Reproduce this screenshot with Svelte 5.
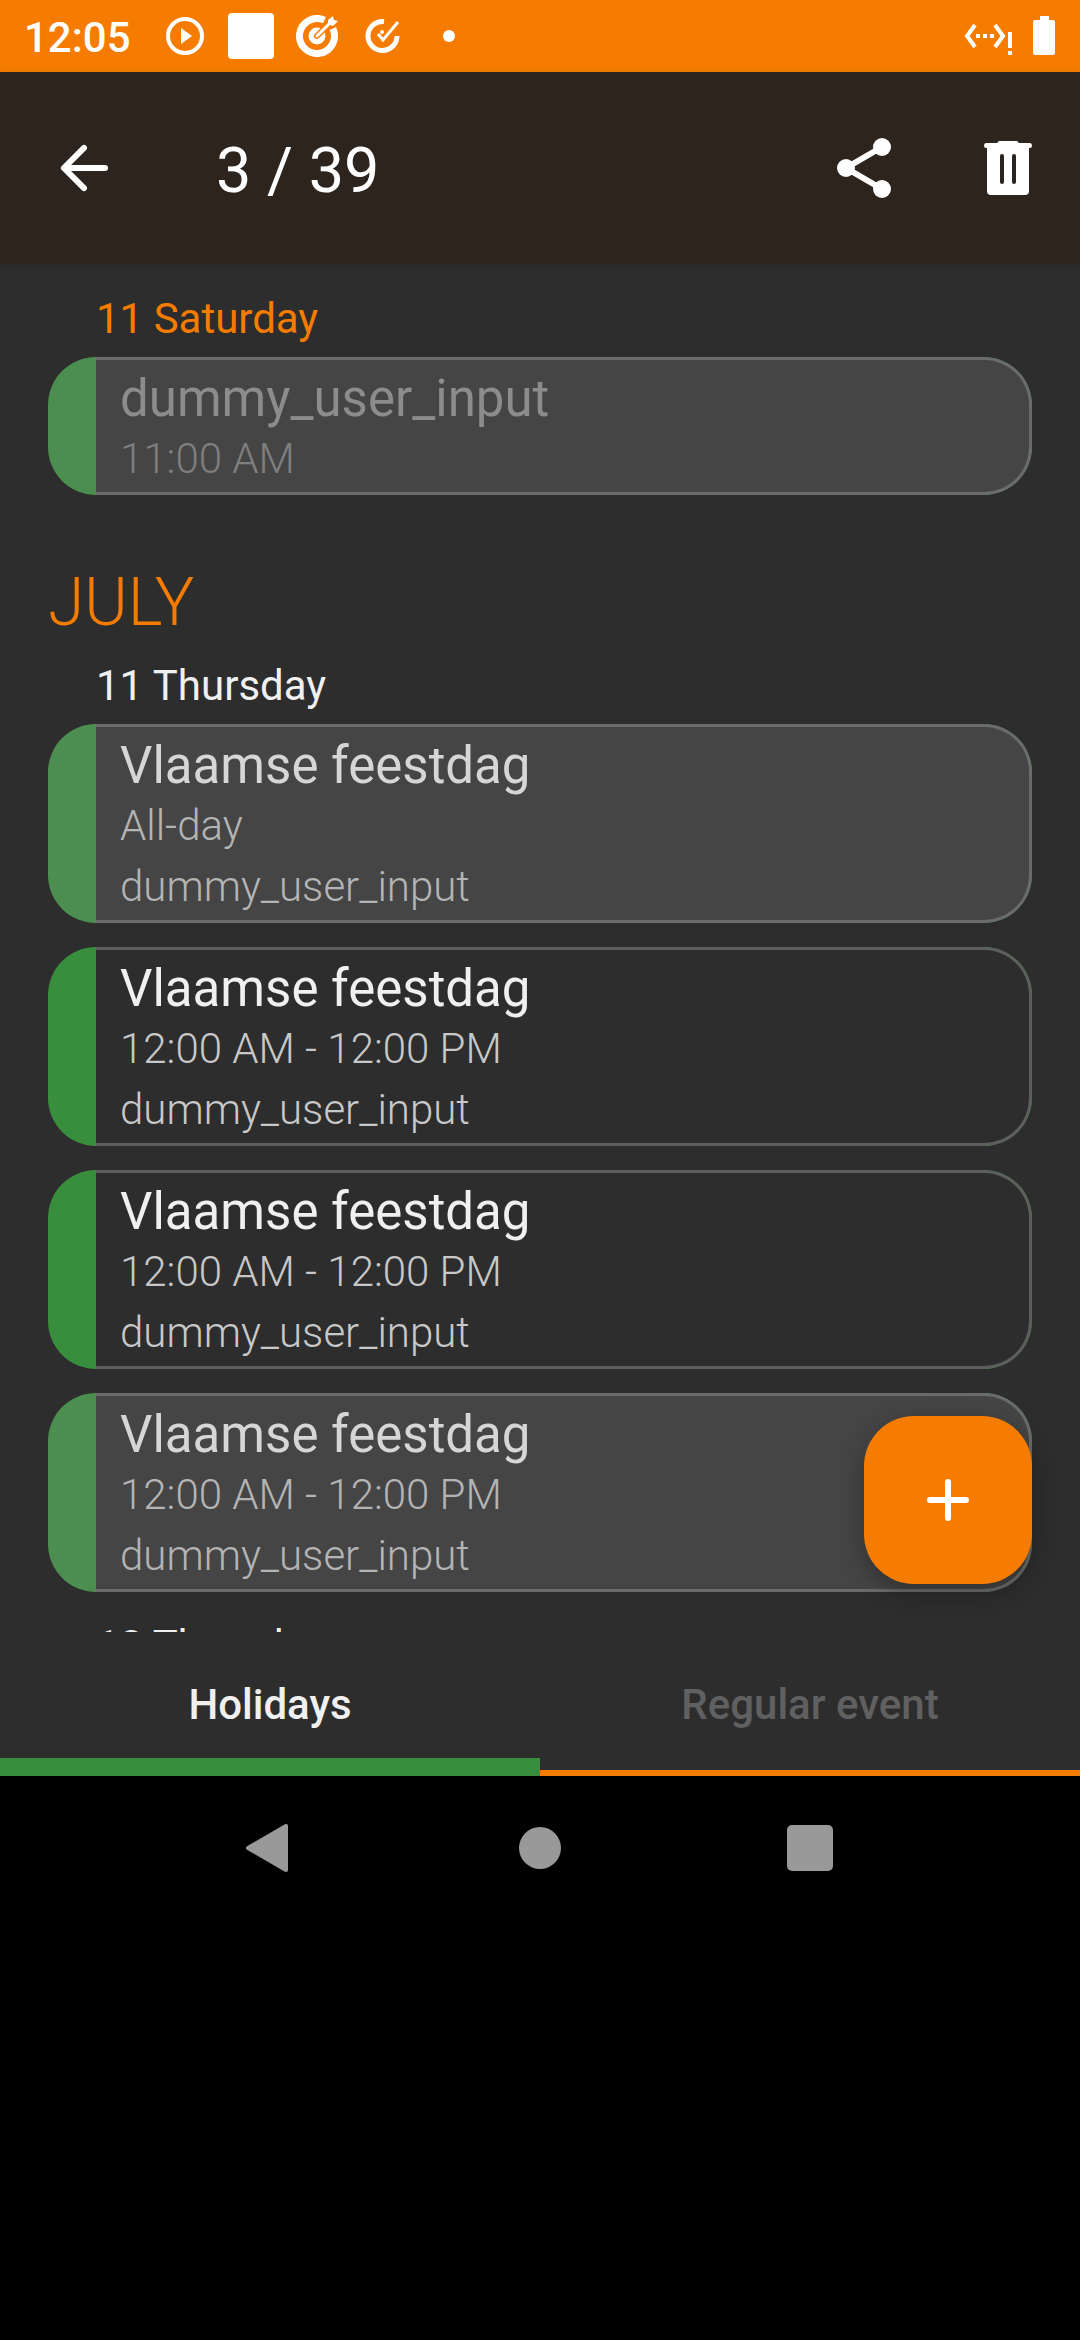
<script>
  const groups = [
    {
      month: null,
      days: [
        {
          label: '11 Saturday',
          today: true,
          events: [{ title: 'dummy_user_input', lines: ['11:00 AM'], selected: true, past: true }],
        },
      ],
    },
    {
      month: 'JULY',
      days: [
        {
          label: '11 Thursday',
          events: [
            { title: 'Vlaamse feestdag', lines: ['All-day', 'dummy_user_input'], selected: true },
            { title: 'Vlaamse feestdag', lines: ['12:00 AM - 12:00 PM', 'dummy_user_input'] },
            { title: 'Vlaamse feestdag', lines: ['12:00 AM - 12:00 PM', 'dummy_user_input'] },
            { title: 'Vlaamse feestdag', lines: ['12:00 AM - 12:00 PM', 'dummy_user_input'], selected: true },
          ],
        },
        { label: '18 Thursday', events: [] },
      ],
    },
  ];
</script>

<div class="screen">
  <header class="status">
    <span class="clock">12:05</span>
    <svg class="play" width="38" height="38" viewBox="0 0 38 38" aria-hidden="true">
      <circle cx="19" cy="19" r="17" fill="none" stroke="#fff" stroke-width="4" />
      <path d="M15 11v16l11-8z" fill="#fff" />
    </svg>
    <span class="block"></span>
    <svg class="target" width="42" height="42" viewBox="0 0 42 42" aria-hidden="true">
      <path d="M28.500 5.200A17.500 17.500 0 1 0 36.800 13.500" fill="none" stroke="#fff" stroke-width="7" />
      <circle cx="21" cy="21" r="8.500" fill="#fff" />
      <path d="M21 21L34 8" stroke="#f57c00" stroke-width="6" stroke-linecap="round" />
      <path d="M21 21L36 6" stroke="#fff" stroke-width="3" stroke-linecap="round" />
      <path d="M32 9V5l5-4 1 4 4 1-5 5z" fill="#fff" />
    </svg>
    <svg class="check" width="36" height="36" viewBox="0 0 36 36" aria-hidden="true">
      <path d="M19 3.500A14.500 14.500 0 1 0 32 18" fill="none" stroke="#fff" stroke-width="5" stroke-linecap="butt" />
      <path d="M13 16l5 6L33 4" fill="none" stroke="#fff" stroke-width="3" />
      <circle cx="17" cy="14" r="2" fill="#fff" />
    </svg>
    <span class="more"></span>
    <svg class="net" width="50" height="38" viewBox="0 0 50 38" aria-hidden="true">
      <path d="M12 8L4 19l8 11M32 8l8 11-8 11" fill="none" stroke="#fff" stroke-width="4" />
      <path d="M13 17h4v4h-4zM20 17h4v4h-4zM27 17h4v4h-4zM45 15h4v16h-4zM45 34h4v4h-4z" fill="#fff" />
    </svg>
    <svg width="24" height="40" viewBox="0 0 24 40" aria-hidden="true">
      <path d="M8 0h9v4h4q2 0 2 2v31q0 2-2 2H3q-2 0-2-2V6q0-2 2-2h5z" fill="#fff" />
    </svg>
  </header>

  <div class="toolbar">
    <button class="icon" aria-label="Back">
      <svg width="72" height="72" viewBox="0 0 24 24">
        <path d="M19 12H5.500M12 5.300L5.300 12l6.700 6.700" fill="none" stroke="#fff" stroke-width="2" stroke-linecap="round" stroke-linejoin="round" />
      </svg>
    </button>
    <h1>3 / 39</h1>
    <button class="icon" aria-label="Share">
      <svg width="72" height="72" viewBox="0 0 24 24">
        <path d="M18 5L6 12l12 7" fill="none" stroke="#fff" stroke-width="2" />
        <circle cx="18" cy="5" r="3" fill="#fff" />
        <circle cx="6" cy="12" r="3" fill="#fff" />
        <circle cx="18" cy="19" r="3" fill="#fff" />
      </svg>
    </button>
    <button class="icon" aria-label="Delete">
      <svg width="72" height="72" viewBox="0 0 72 72">
        <path d="M27 9h18l2 2h11q2 0 2 2.500T58 16h-1v43q0 4-4 4H19q-4 0-4-4V16h-1q-2 0-2-2.500T14 11h11z" fill="#fff" />
        <path d="M30 24v26M42 24v26" stroke="#2c241d" stroke-width="4" stroke-linecap="round" />
      </svg>
    </button>
  </div>

  <div class="content">
    <main class="list">
      {#each groups as group}
        {#if group.month}<h2>{group.month}</h2>{/if}
        {#each group.days as day}
          <section>
            <h3 class:today={day.today}>{day.label}</h3>
            {#each day.events as event}
              <article class:selected={event.selected} class:past={event.past}>
                <div class="body">
                  <h4>{event.title}</h4>
                  {#each event.lines as line}<p>{line}</p>{/each}
                </div>
              </article>
            {/each}
          </section>
        {/each}
      {/each}
    </main>
    <button class="fab" aria-label="New event">
      <svg width="72" height="72" viewBox="0 0 24 24">
        <path d="M12 6v12M6 12h12" stroke="#fff" stroke-width="2" stroke-linecap="round" />
      </svg>
    </button>
  </div>

  <nav class="tabs">
    <button class="active">Holidays</button>
    <button>Regular event</button>
  </nav>

  <nav class="system">
    <button aria-label="System back">
      <svg width="48" height="48" viewBox="0 0 48 48"><path d="M40 2v44L2 24z" fill="#999" stroke="#999" stroke-width="4" stroke-linejoin="round" /></svg>
    </button>
    <button aria-label="Home">
      <svg width="42" height="42" viewBox="0 0 42 42"><circle cx="21" cy="21" r="21" fill="#999" /></svg>
    </button>
    <button aria-label="Recent apps">
      <svg width="46" height="46" viewBox="0 0 46 46"><rect width="46" height="46" rx="5" fill="#999" /></svg>
    </button>
  </nav>
</div>

<style>
  :global(body) {
    margin: 0;
    background: #000;
  }
  .screen {
    display: flex;
    flex-direction: column;
    box-sizing: border-box;
    height: 100vh;
    padding-bottom: 420px;
    font-family: Roboto, sans-serif;
    font-size: 42px;
    color: #f0f0f0;
    background: #000;
  }
  button {
    display: flex;
    align-items: center;
    justify-content: center;
    padding: 0;
    border: 0;
    background: none;
    font: inherit;
    color: inherit;
  }
  svg {
    display: block;
    flex: none;
  }
  h1, h2, h3, h4, p {
    margin: 0;
    font-weight: 400;
  }
  .status {
    display: flex;
    align-items: center;
    height: 72px;
    padding: 0 24px;
    background: #f57c00;
    color: #fff;
  }
  .clock {
    font-weight: 500;
    margin-top: 2px;
    margin-right: 35px;
  }
  .play {
    margin-right: 24px;
  }
  .block {
    width: 46px;
    height: 46px;
    margin-right: 22px;
    border-radius: 4px;
    background: #fff;
  }
  .target {
    margin-right: 27px;
  }
  .check {
    margin-right: 42px;
  }
  .more {
    width: 12px;
    height: 12px;
    margin-right: auto;
    border-radius: 50%;
    background: #fff;
  }
  .net {
    margin-right: 19px;
  }
  .toolbar {
    position: relative;
    z-index: 1;
    display: flex;
    align-items: center;
    gap: 72px;
    height: 192px;
    padding: 0 36px 0 48px;
    background: #2c241d;
    box-shadow: 0 2px 8px rgb(0 0 0 / 12%);
  }
  h1 {
    flex: 1;
    padding: 5px 0 0 24px;
    font-size: 63px;
    color: #fff;
  }
  .content {
    position: relative;
    display: flex;
    flex: 1;
    min-height: 0;
    background: #2d2d2d;
  }
  .list {
    flex: 1;
    padding: 1px 48px 0;
    overflow: hidden;
  }
  h2 {
    margin-top: 68px;
    font-size: 66px;
    line-height: 80px;
    font-weight: 300;
    color: #f57c00;
  }
  h3 {
    padding: 24px 48px 8px;
    font-size: 42px;
    line-height: 60px;
  }
  h2 + section h3 {
    padding-top: 13px;
  }
  .today {
    color: #f57c00;
  }
  article {
    display: flex;
    overflow: hidden;
    border-radius: 48px;
    background: #388e3c;
  }
  article + article {
    margin-top: 24px;
  }
  .body {
    flex: 1;
    margin-left: 48px;
    padding: 9px 24px 3px;
    border: 3px solid #5e5e5e;
    border-left: 0;
    border-radius: 0 48px 48px 0;
    background: #2d2d2d;
  }
  h4 {
    font-size: 51px;
    line-height: 59px;
  }
  p {
    font-size: 42px;
    line-height: 61px;
    font-weight: 300;
    color: #c8c8c8;
  }
  .selected {
    background: #4c8e50;
  }
  .selected .body {
    border-color: #6b6b6b;
    background: #454545;
  }
  .selected h4 {
    color: #d6d6d6;
  }
  .selected p {
    color: #b4b4b4;
  }
  .past h4 {
    color: #8c8c8c;
  }
  .past p {
    color: #7f7f7f;
  }
  .fab {
    position: absolute;
    right: 48px;
    bottom: 48px;
    width: 168px;
    height: 168px;
    border-radius: 50px;
    background: #f57c00;
    box-shadow: 0 8px 24px rgb(0 0 0 / 30%);
  }
  .tabs {
    display: flex;
    flex: none;
    height: 144px;
    background: #2d2d2d;
  }
  .tabs button {
    flex: 1;
    box-sizing: border-box;
    border-bottom: 6px solid #f57c00;
    padding-top: 6px;
    font-weight: 500;
    color: #606060;
  }
  .tabs .active {
    border-bottom: 18px solid #388e3c;
    padding-top: 18px;
    color: #f0f0f0;
  }
  .system {
    display: flex;
    flex: none;
    justify-content: center;
    height: 144px;
  }
  .system button {
    width: 25%;
  }
  .screen {
    padding-bottom: 420px;
  }
</style>
